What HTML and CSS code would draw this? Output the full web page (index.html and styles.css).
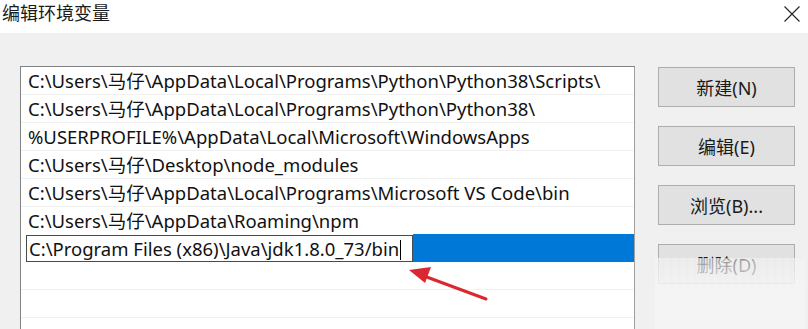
FILE: index.html
```html
<!DOCTYPE html>
<html lang="zh-CN">
<head>
    <meta charset="utf-8">
    <title>编辑环境变量</title>
    <link rel="stylesheet" href="styles.css">
</head>
<body>

<div class="titlebar">
    <span class="title">编辑环境变量</span>
    <svg class="close" width="16" height="16" viewBox="0 0 16 16">
        <path d="M0.5 0.5 L15.5 15.5 M15.5 0.5 L0.5 15.5" stroke="#222" stroke-width="1.1" fill="none"/>
    </svg>
</div>

<div class="main">
    <div class="path-list">
        <div class="row">C:\Users\马仔\AppData\Local\Programs\Python\Python38\Scripts\</div>
        <div class="row">C:\Users\马仔\AppData\Local\Programs\Python\Python38\</div>
        <div class="row">%USERPROFILE%\AppData\Local\Microsoft\WindowsApps</div>
        <div class="row">C:\Users\马仔\Desktop\node_modules</div>
        <div class="row">C:\Users\马仔\AppData\Local\Programs\Microsoft VS Code\bin</div>
        <div class="row">C:\Users\马仔\AppData\Roaming\npm</div>
        <div class="row editing">
            <span class="edit-box">C:\Program Files (x86)\Java\jdk1.8.0_73/bin<span class="caret"></span></span>
        </div>
        <div class="row"></div>
        <div class="row"></div>
    </div>

    <div class="buttons">
        <button>新建(N)</button>
        <button>编辑(E)</button>
        <button>浏览(B)...</button>
        <button class="faded">删除(D)</button>
    </div>
</div>

<!-- red annotation arrow -->
<svg class="arrow" width="808" height="329" viewBox="0 0 808 329">
    <path d="M486 299 L424 276" stroke="#d9282f" stroke-width="3" stroke-linecap="round" fill="none"/>
    <path d="M409 270 L431 267 L425 283 Z" fill="#d9282f"/>
</svg>

<div class="watermark"></div>

</body>
</html>
```

FILE: styles.css
```css
body {
    margin: 0;
    background: #f0f0f0;
    font-family: "Noto Sans", "Noto Sans CJK SC", sans-serif;
    color: #000;
    width: 808px;
    height: 329px;
    overflow: hidden;
    position: relative;
}
.titlebar {
    height: 33px;
    background: #fff;
    display: flex;
    align-items: flex-start;
    justify-content: space-between;
}
.title {
    font-family: "Noto Sans CJK SC", sans-serif;
    font-size: 18px;
    line-height: 24px;
    padding-left: 2px;
    color: #1a1a1a;
}
.close {
    margin: 6px 8px 0 0;
}
.main {
    display: flex;
    padding: 33px 0 0 20px;
    gap: 23px;
}
.path-list {
    width: 613px;
    height: 262px;
    overflow: hidden;
    background: #fff;
    border: 1px solid #828282;
    border-bottom: none;
    border-right-color: #a0a0a0;
}
.row {
    height: 27px;
    border-bottom: 1px solid #f1f1f1;
    padding-left: 7px;
    font-size: 18.5px;
    line-height: 27px;
    white-space: nowrap;
    color: #111;
}
.row.editing {
    height: 28px;
    margin-top: -1px;
    padding-left: 5px;
    background: linear-gradient(to right, #fff 392px, #0078d7 392px);
    border-bottom: none;
    display: flex;
    align-items: center;
}
.edit-box {
    display: inline-block;
    width: 383px;
    height: 25px;
    line-height: 25px;
    border: 1px solid #4a4a4a;
    padding-left: 2px;
    background: #fff;
    overflow: hidden;
}
.caret {
    display: inline-block;
    width: 1px;
    height: 20px;
    background: #000;
    vertical-align: -4px;
    margin-left: 1px;
}
.buttons {
    display: flex;
    flex-direction: column;
    gap: 19px;
    padding-top: 1px;
}
.buttons button {
    width: 137px;
    height: 40px;
    background: #e1e1e1;
    border: 1px solid #adadad;
    font-family: "Noto Sans", "Noto Sans CJK SC", sans-serif;
    font-size: 18px;
    color: #1a1a1a;
    padding: 0;
}
.arrow {
    position: absolute;
    left: 0;
    top: 0;
    pointer-events: none;
}
.watermark {
    position: absolute;
    left: 655px;
    top: 258px;
    width: 150px;
    height: 71px;
    background:
        repeating-linear-gradient(to right, rgba(245,245,245,0) 0, rgba(245,245,245,0.35) 4px, rgba(245,245,245,0) 8px),
        linear-gradient(to bottom, rgba(244,244,244,0.5), #f4f4f4 60%);
}
```
